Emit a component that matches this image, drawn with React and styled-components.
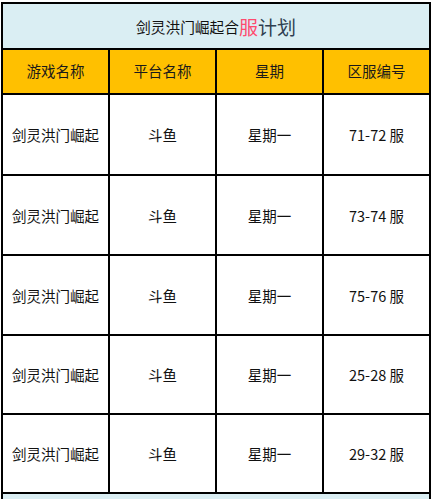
import React from 'react';
import styled, { createGlobalStyle } from 'styled-components';

const GlobalStyle = createGlobalStyle`
  html, body {
    margin: 0;
    padding: 0;
    background: #ffffff;
  }
  body {
    font-family: "Noto Sans CJK SC", "Noto Sans", sans-serif;
    color: #000;
  }
`;

const rows = [
  { range: '71-72', h: 79 },
  { range: '73-74', h: 78 },
  { range: '75-76', h: 78 },
  { range: '25-28', h: 77 },
  { range: '29-32', h: 77 },
];

const App = () => {
  return (
    <>
      <GlobalStyle />
      <Page>
        <Table>
          <Title>
            剑灵洪门崛起合<Accent>服</Accent>
            <Plan>计划</Plan>
          </Title>
          <HeadRow>
            <HeadCell>游戏名称</HeadCell>
            <HeadCell>平台名称</HeadCell>
            <HeadCell>星期</HeadCell>
            <HeadCell $last>区服编号</HeadCell>
          </HeadRow>
          {rows.map((r, i) => (
            <BodyRow key={r.range} $h={r.h} $last={i === rows.length - 1}>
              <Cell>剑灵洪门崛起</Cell>
              <Cell>斗鱼</Cell>
              <Cell>星期一</Cell>
              <Cell $last>{r.range} 服</Cell>
            </BodyRow>
          ))}
        </Table>
        <NextTable />
      </Page>
    </>
  );
};

const Page = styled.div`
  padding: 2px 0 0 1px;
  width: 430px;
`;

const Table = styled.div`
  width: 430px;
  box-sizing: border-box;
  border: 2px solid #000;
`;

const Title = styled.div`
  height: 44px;
  background-color: #daeef3;
  border-bottom: 2px solid #000;
  display: flex;
  align-items: center;
  justify-content: center;
  font-size: 14.7px;
  color: #111;
`;

const Accent = styled.span`
  font-size: 19px;
  color: #ff4a6e;
`;

const Plan = styled.span`
  font-size: 19px;
  color: #2f3e50;
`;

const HeadRow = styled.div`
  display: grid;
  grid-template-columns: 107px 107px 107px 105px;
  height: 43px;
  border-bottom: 2px solid #000;
  background-color: #ffc000;
`;

const HeadCell = styled.div`
  display: flex;
  align-items: center;
  justify-content: center;
  font-size: 14.5px;
  color: #1a1a1a;
  border-right: ${(p) => (p.$last ? 'none' : '2px solid #000')};
  padding-bottom: 2px;
`;

const BodyRow = styled.div`
  display: grid;
  grid-template-columns: 107px 107px 107px 105px;
  height: ${(p) => p.$h}px;
  border-bottom: ${(p) => (p.$last ? 'none' : '2px solid #000')};
  background-color: #fff;
`;

const Cell = styled.div`
  display: flex;
  align-items: center;
  justify-content: center;
  font-size: 14.5px;
  color: #111;
  border-right: ${(p) => (p.$last ? 'none' : '2px solid #000')};
`;

const NextTable = styled.div`
  height: 20px;
  background-color: #daeef3;
  border-left: 2px solid #000;
  border-right: 2px solid #000;
`;

export default App;
